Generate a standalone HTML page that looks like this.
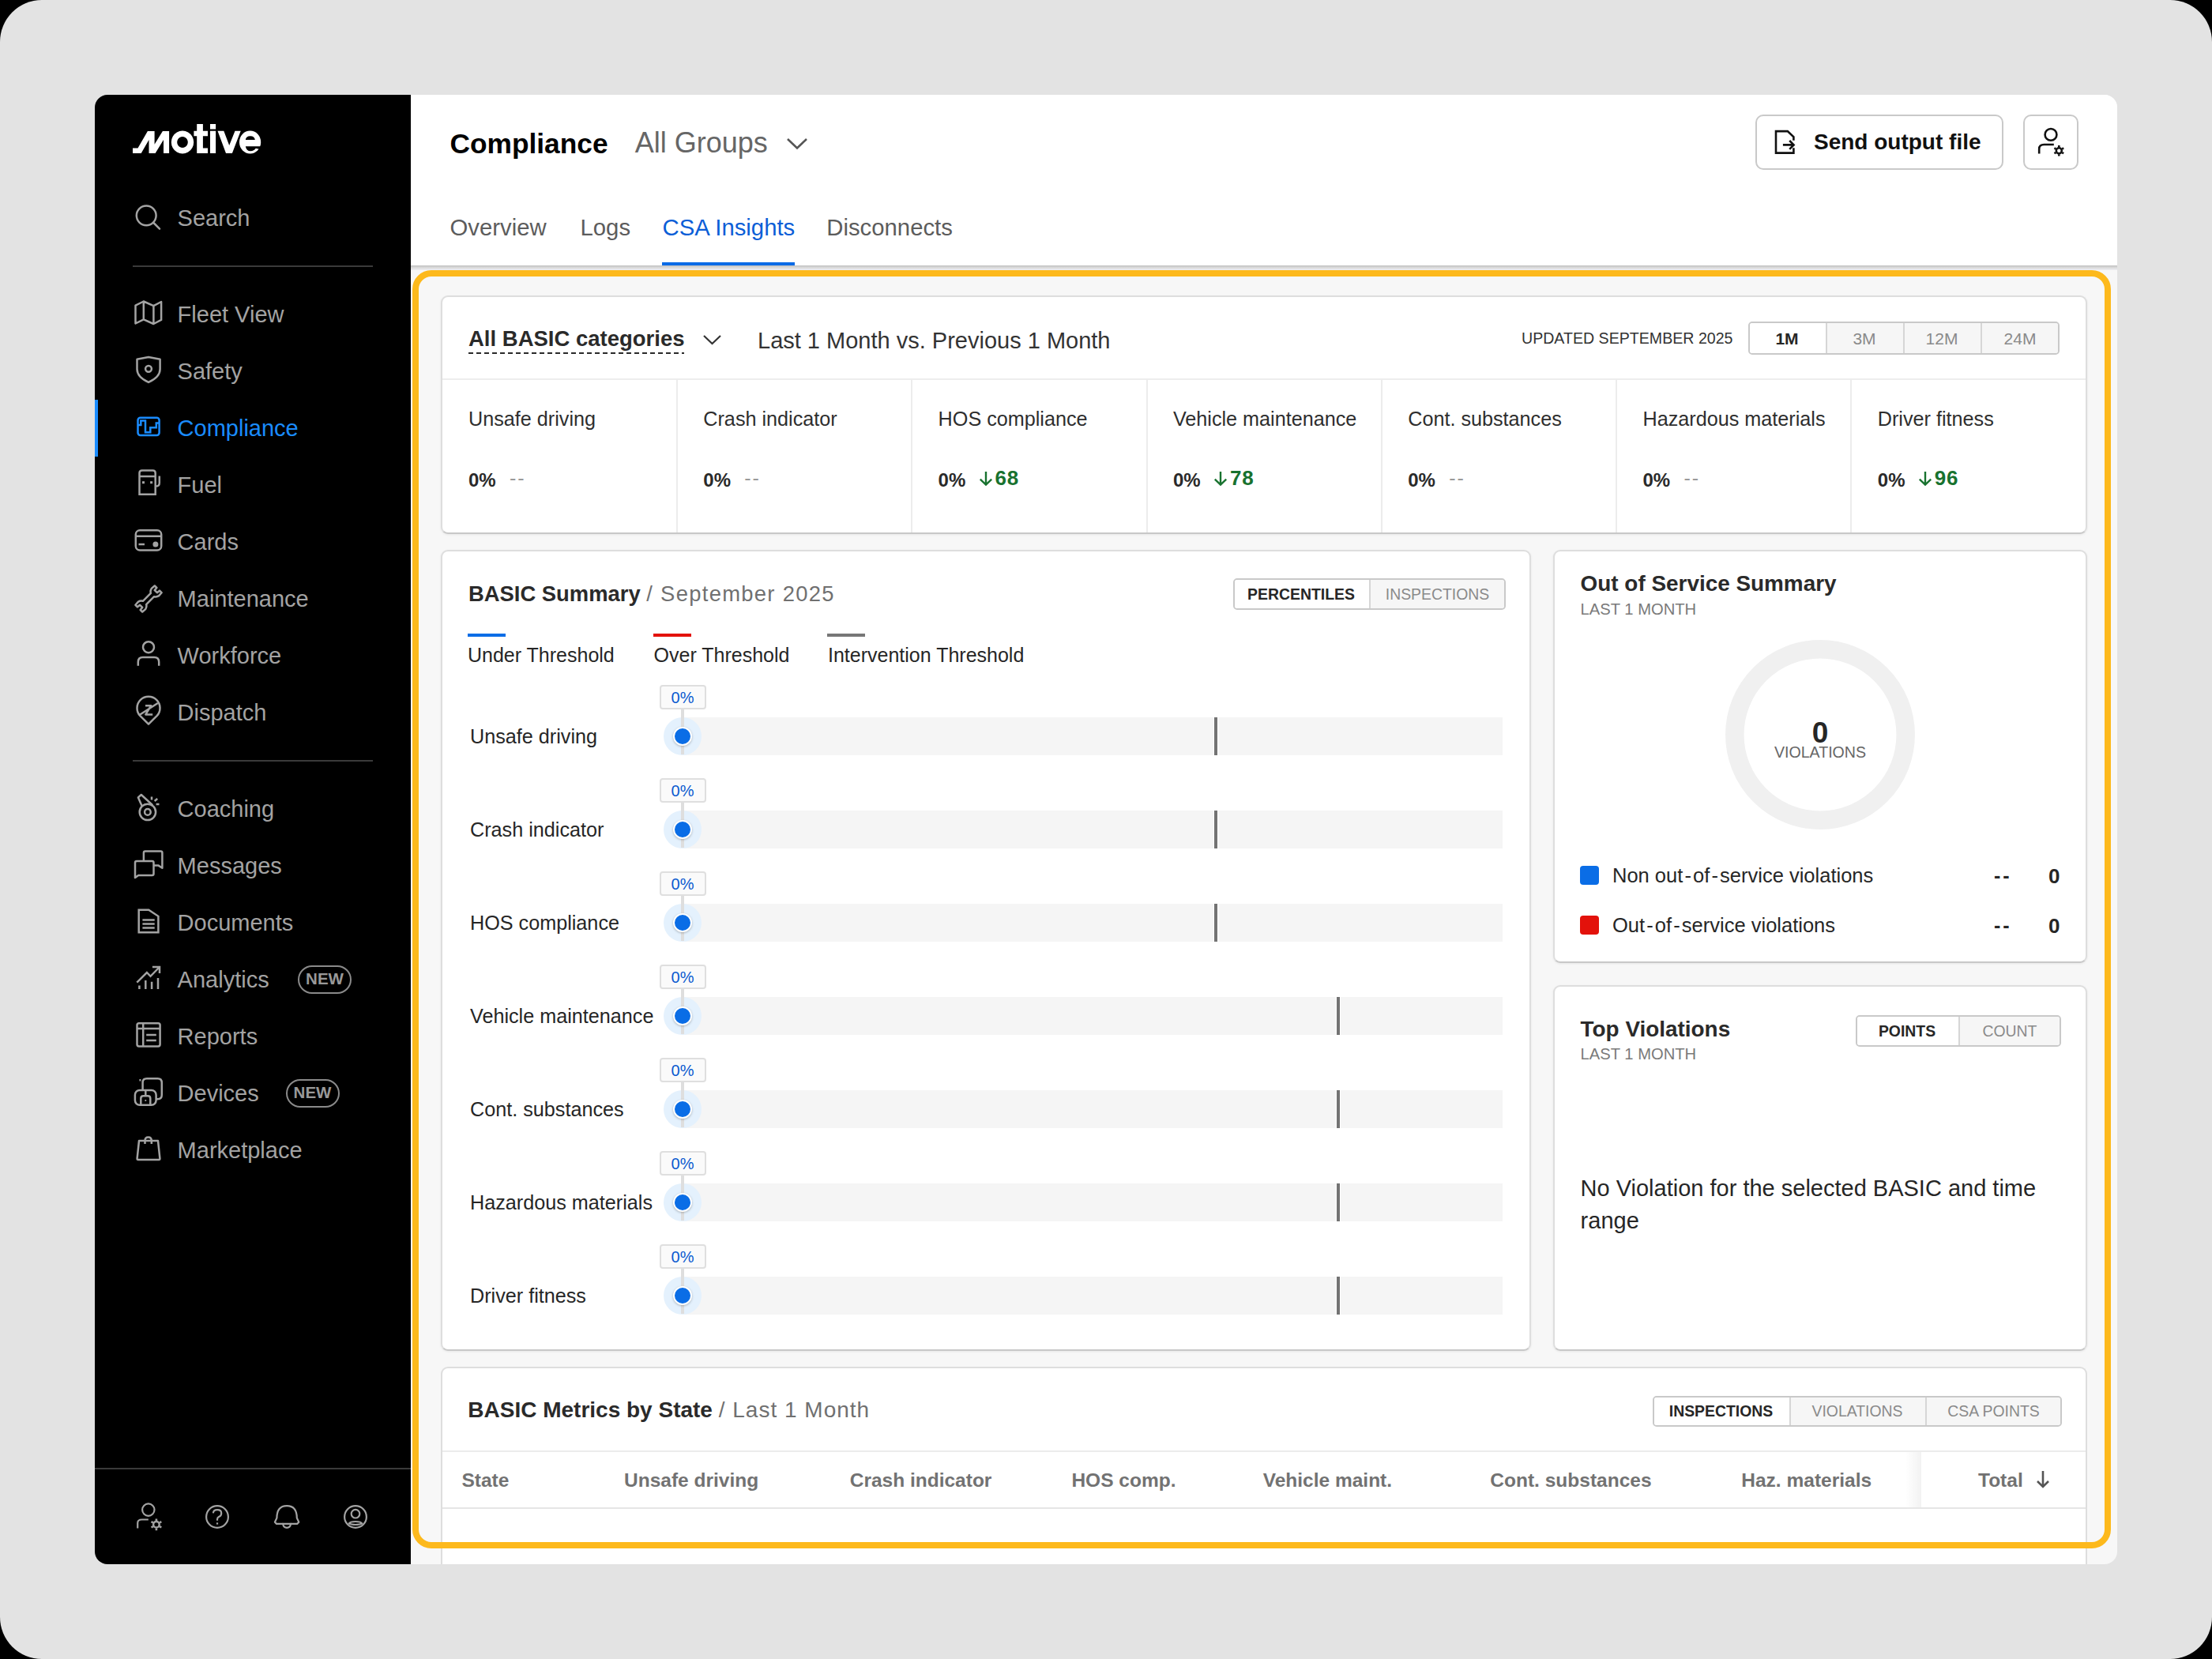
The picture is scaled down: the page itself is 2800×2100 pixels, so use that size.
<!DOCTYPE html>
<html><head><meta charset="utf-8"><title>Compliance - CSA Insights</title>
<style>
html,body{margin:0;padding:0;width:2800px;height:2100px;overflow:hidden;background:#000;}
body{font-family:"Liberation Sans",sans-serif;position:relative;}
.t{position:absolute;white-space:nowrap;line-height:1;}
.r{position:absolute;box-sizing:border-box;}
svg.r{overflow:visible;}
</style></head><body>

<div class="r" style="left:0px;top:0px;width:2800px;height:2100px;background:#e3e3e3;border-radius:53px;"></div>
<div class="r" style="left:120px;top:120px;width:2560px;height:1860px;background:#f7f7f7;border-radius:16px;overflow:hidden;"></div>
<div class="r" style="left:120px;top:120px;width:400px;height:1860px;background:#000;border-radius:16px 0 0 16px;"></div>
<svg class="r" style="left:0;top:0" width="2800" height="2100" viewBox="0 0 2800 2100"><path fill="#fff" d="M168,194 L168,187.5 L174.5,187.5 L186.9,166 L195.6,166 L195.6,182.7 L205.9,166 L214.1,166 L214.1,194 L207,194 L207,177 L196.6,194 L188.5,194 L188.5,177 L178.7,194 ZM231,165.6 a14.2,14.4 0 1,0 0.01,0 Z M231,173.1 a6.8,6.9 0 1,1 -0.01,0 ZM249.2,157 L256.9,157 L256.9,165.8 L263,165.8 L263,172.3 L256.9,172.3 L256.9,187.6 L263,187.6 L263,194 L249.2,194 L249.2,172.3 L245.4,172.3 L245.4,165.8 L249.2,165.8 ZM266,157 L273.1,157 L273.1,163.4 L266,163.4 Z M266,165.8 L273.1,165.8 L273.1,194 L266,194 ZM275.5,165.8 L283.3,165.8 L290.2,184 L297.5,165.8 L304.7,165.8 L293.9,194 L286,194 Z"/><ellipse cx="316.6" cy="180" rx="13.6" ry="14.4" fill="#fff"/><path fill="#000" d="M310.8,177 Q311.4,172.2 316.8,172.2 Q322.2,172.2 322.8,177 Z"/><path fill="#000" d="M310.8,185.2 Q312,191.2 317,191.2 Q321.6,191.2 323.8,187.8 L331,189.5 L331,185.2 Z"/></svg>
<svg class="r" style="left:168px;top:256px" width="40" height="40" viewBox="0 0 20 20" fill="none" stroke="#a3a3a3" stroke-width="1.25" stroke-linecap="round" stroke-linejoin="round"><circle cx="8.6" cy="8.4" r="6.2"/><path d="M13.2,13 L17,16.8"/></svg>
<div class="t" style="left:224.6px;top:261.5px;font-size:29px;font-weight:400;color:#a3a3a3;">Search</div>
<div class="r" style="left:168px;top:336px;width:304px;height:2px;background:#3a3a3a;"></div>
<svg class="r" style="left:168px;top:378px" width="40" height="40" viewBox="0 0 20 20" fill="none" stroke="#a3a3a3" stroke-width="1.25" stroke-linecap="round" stroke-linejoin="round"><path d="M1.75,4.3 L6.9,1.75 L13.2,4.6 L18.05,2 L18.05,13.45 L13.2,16 L6.9,13.2 L1.75,15.75 Z M6.9,1.75 L6.9,13.2 M13.2,4.6 L13.2,16"/></svg>
<div class="t" style="left:224.6px;top:383.5px;font-size:29px;font-weight:400;color:#a3a3a3;">Fleet View</div>
<svg class="r" style="left:168px;top:450px" width="40" height="40" viewBox="0 0 20 20" fill="none" stroke="#a3a3a3" stroke-width="1.25" stroke-linecap="round" stroke-linejoin="round"><path d="M10,0.95 L17.3,2.35 L17.3,8.6 Q17.3,13.6 10,16.95 Q2.75,13.6 2.75,8.6 L2.75,2.35 Z"/><circle cx="10" cy="8.4" r="1.95"/></svg>
<div class="t" style="left:224.6px;top:455.5px;font-size:29px;font-weight:400;color:#a3a3a3;">Safety</div>
<svg class="r" style="left:168px;top:522px" width="40" height="40" viewBox="0 0 20 20" fill="none" stroke="#1a8cff" stroke-width="1.25" stroke-linecap="round" stroke-linejoin="round"><rect x="3.25" y="3.4" width="13.55" height="11.1" rx="1.6"/><path d="M3.25,8.05 L5.15,8.05 L5.15,5.3 L8,5.3 L8,12.65 L11.15,12.65 L11.15,9.6 L14.9,9.6 L14.9,6.75 L16.8,6.75" stroke-linejoin="miter" stroke-linecap="butt"/></svg>
<div class="t" style="left:224.6px;top:527.5px;font-size:29px;font-weight:400;color:#1a8cff;">Compliance</div>
<svg class="r" style="left:168px;top:594px" width="40" height="40" viewBox="0 0 20 20" fill="none" stroke="#a3a3a3" stroke-width="1.25" stroke-linecap="round" stroke-linejoin="round"><path d="M4.25,15.9 L4.25,2.4 Q4.25,0.7 5.95,0.7 L12.65,0.7 Q14.35,0.7 14.35,2.4 L14.35,15.9 Z M4.25,4.55 L14.35,4.55 M14.35,10.85 Q16.9,10.85 16.9,8.8 L16.9,4.2" stroke-linejoin="miter" stroke-linecap="butt"/><rect x="6" y="7.6" width="1.5" height="1.5" fill="#a3a3a3" stroke="none"/><rect x="11.05" y="7.6" width="1.5" height="1.5" fill="#a3a3a3" stroke="none"/></svg>
<div class="t" style="left:224.6px;top:599.5px;font-size:29px;font-weight:400;color:#a3a3a3;">Fuel</div>
<svg class="r" style="left:168px;top:666px" width="40" height="40" viewBox="0 0 20 20" fill="none" stroke="#a3a3a3" stroke-width="1.25" stroke-linecap="round" stroke-linejoin="round"><rect x="1.9" y="2.65" width="16.2" height="12.55" rx="2.6"/><path d="M1.9,6.4 L18.1,6.4 M3.75,11.45 L7.5,11.45" stroke-linecap="butt"/><circle cx="14.45" cy="11.45" r="1.75" fill="#a3a3a3" stroke="none"/></svg>
<div class="t" style="left:224.6px;top:671.5px;font-size:29px;font-weight:400;color:#a3a3a3;">Cards</div>
<svg class="r" style="left:168px;top:738px" width="40" height="40" viewBox="0 0 20 20" fill="none" stroke="#a3a3a3" stroke-width="1.25" stroke-linecap="round" stroke-linejoin="round"><g transform="rotate(-45 10 10)"><path d="M1.4,6.9 L4,6.7 Q5.7,7.1 6.5,8.5 L13.5,8.5 Q14.3,7.1 16,6.7 L18.6,6.9 L18.6,8.7 L16.6,8.9 L16.6,11.1 L18.6,11.3 L18.6,13.1 L16,13.3 Q14.3,12.9 13.5,11.5 L6.5,11.5 Q5.7,12.9 4,13.3 L1.4,13.1 L1.4,11.3 L3.4,11.1 L3.4,8.9 L1.4,8.7 Z"/></g></svg>
<div class="t" style="left:224.6px;top:743.5px;font-size:29px;font-weight:400;color:#a3a3a3;">Maintenance</div>
<svg class="r" style="left:168px;top:810px" width="40" height="40" viewBox="0 0 20 20" fill="none" stroke="#a3a3a3" stroke-width="1.25" stroke-linecap="round" stroke-linejoin="round"><circle cx="10" cy="4.6" r="3.5"/><path d="M3.4,16.4 L3.4,14 Q3.4,11 6.4,11 L13.6,11 Q16.6,11 16.6,14 L16.6,16.4" stroke-linecap="butt"/></svg>
<div class="t" style="left:224.6px;top:815.5px;font-size:29px;font-weight:400;color:#a3a3a3;">Workforce</div>
<svg class="r" style="left:168px;top:882px" width="40" height="40" viewBox="0 0 20 20" fill="none" stroke="#a3a3a3" stroke-width="1.25" stroke-linecap="round" stroke-linejoin="round"><path d="M10,17.35 L4.7,12.1 A7.25,7.25 0 1,1 15.3,12.1 Z"/><path d="M4.45,11.35 L15.9,4 M8,5.6 L11.6,5.6 L8.2,11.2 L12.6,11.2" stroke-linecap="butt"/></svg>
<div class="t" style="left:224.6px;top:887.5px;font-size:29px;font-weight:400;color:#a3a3a3;">Dispatch</div>
<div class="r" style="left:120px;top:506px;width:4px;height:72px;background:#1a8cff;"></div>
<div class="r" style="left:168px;top:962px;width:304px;height:2px;background:#3a3a3a;"></div>
<svg class="r" style="left:168px;top:1004px" width="40" height="40" viewBox="0 0 20 20" fill="none" stroke="#a3a3a3" stroke-width="1.25" stroke-linecap="round" stroke-linejoin="round"><circle cx="9.45" cy="11.95" r="5.1"/><circle cx="9.45" cy="11.95" r="1.9"/><path d="M5.9,8.3 L3.45,2.7 L5.4,1 L12.6,7.6" stroke-linecap="butt"/><path d="M12,2.3 L12,4.25 M13.85,5 L15.6,3.5 M14.8,7 L16.75,7" stroke-linecap="butt"/></svg>
<div class="t" style="left:224.6px;top:1009.5px;font-size:29px;font-weight:400;color:#a3a3a3;">Coaching</div>
<svg class="r" style="left:168px;top:1076px" width="40" height="40" viewBox="0 0 20 20" fill="none" stroke="#a3a3a3" stroke-width="1.25" stroke-linecap="round" stroke-linejoin="round"><path d="M6.95,7 L6.95,1.75 Q6.95,0.75 7.95,0.75 L17.7,0.75 Q18.7,0.75 18.7,1.75 L18.7,11.35 L16.3,9.8 L13.25,9.8" stroke-linecap="butt"/><path d="M1.5,17.5 L1.5,8 Q1.5,7 2.5,7 L12.25,7 Q13.25,7 13.25,8 L13.25,15 Q13.25,16 12.25,16 L3.6,16 Z"/></svg>
<div class="t" style="left:224.6px;top:1081.5px;font-size:29px;font-weight:400;color:#a3a3a3;">Messages</div>
<svg class="r" style="left:168px;top:1148px" width="40" height="40" viewBox="0 0 20 20" fill="none" stroke="#a3a3a3" stroke-width="1.25" stroke-linecap="round" stroke-linejoin="round"><path d="M3.85,1.85 L10.1,1.85 L16.2,5.9 L16.2,16.1 L3.85,16.1 Z" stroke-linejoin="miter"/><path d="M6.2,8.25 L13.85,8.25 M6.2,10.75 L13.85,10.75 M6.2,13.2 L13.85,13.2" stroke-linecap="butt"/></svg>
<div class="t" style="left:224.6px;top:1153.5px;font-size:29px;font-weight:400;color:#a3a3a3;">Documents</div>
<svg class="r" style="left:168px;top:1220px" width="40" height="40" viewBox="0 0 20 20" fill="none" stroke="#a3a3a3" stroke-width="1.25" stroke-linecap="round" stroke-linejoin="round"><path d="M2.65,11.8 L8.95,5.5 L11.25,7.9 L17,2 M12.45,2 L17,2 L17,5.95" stroke-linecap="butt" stroke-linejoin="miter"/><path d="M4.2,13.75 L4.2,16 M8.15,10.5 L8.15,16 M12.05,11.4 L12.05,16 M16,9 L16,16" stroke-linecap="butt"/></svg>
<div class="t" style="left:224.6px;top:1225.5px;font-size:29px;font-weight:400;color:#a3a3a3;">Analytics</div>
<svg class="r" style="left:168px;top:1292px" width="40" height="40" viewBox="0 0 20 20" fill="none" stroke="#a3a3a3" stroke-width="1.25" stroke-linecap="round" stroke-linejoin="round"><rect x="2.75" y="1.6" width="14.55" height="14.6" rx="1.2"/><path d="M2.75,5 L17.3,5 M6.6,1.6 L6.6,16.2 M8.6,9 L14.9,9 M8.6,12.45 L14.9,12.45" stroke-linecap="butt"/></svg>
<div class="t" style="left:224.6px;top:1297.5px;font-size:29px;font-weight:400;color:#a3a3a3;">Reports</div>
<svg class="r" style="left:168px;top:1364px" width="40" height="40" viewBox="0 0 20 20" fill="none" stroke="#a3a3a3" stroke-width="1.25" stroke-linecap="round" stroke-linejoin="round"><path d="M5.2,1.6 L4.2,1.6 M6.3,7.95 L6.3,3.2 Q6.3,0.6 8.9,0.6 L15.8,0.6 Q18.4,0.6 18.4,3.2 L18.4,11 Q18.4,13.6 15.8,13.6 L14.8,13.6" stroke-linecap="butt"/><rect x="1.45" y="7.95" width="13.35" height="9.45" rx="3"/><path d="M5.15,17.4 L5.15,13.2 Q5.15,11.65 6.7,11.65 L9.6,11.65 Q11.15,11.65 11.15,13.2 L11.15,17.4 M8.15,7.95 L8.15,11.65" stroke-linecap="butt"/><circle cx="8.15" cy="14.5" r="0.55" fill="#a3a3a3" stroke="none"/></svg>
<div class="t" style="left:224.6px;top:1369.5px;font-size:29px;font-weight:400;color:#a3a3a3;">Devices</div>
<svg class="r" style="left:168px;top:1436px" width="40" height="40" viewBox="0 0 20 20" fill="none" stroke="#a3a3a3" stroke-width="1.25" stroke-linecap="round" stroke-linejoin="round"><path d="M4,4 L16,4 L17.2,15.2 Q17.3,16 16.5,16 L3.5,16 Q2.7,16 2.8,15.2 Z"/><path d="M7.75,6 L7.75,4 Q7.75,1.7 9.85,1.7 Q11.9,1.7 11.9,4 L11.9,6" stroke-linecap="butt"/></svg>
<div class="t" style="left:224.6px;top:1441.5px;font-size:29px;font-weight:400;color:#a3a3a3;">Marketplace</div>
<div class="r" style="left:377px;top:1222px;width:68px;height:36px;border:2.4px solid #8a8a8a;border-radius:18px;"></div>
<div class="t" style="left:111.0px;width:600px;text-align:center;top:1228.8px;font-size:20.5px;font-weight:700;color:#999;">NEW</div>
<div class="r" style="left:361.5px;top:1366px;width:68px;height:36px;border:2.4px solid #8a8a8a;border-radius:18px;"></div>
<div class="t" style="left:95.5px;width:600px;text-align:center;top:1372.8px;font-size:20.5px;font-weight:700;color:#999;">NEW</div>
<div class="r" style="left:120px;top:1858px;width:400px;height:2px;background:#3a3a3a;"></div>
<svg class="r" style="left:169px;top:1900px" width="40" height="40" viewBox="0 0 20 20" fill="none" stroke="#a3a3a3" stroke-width="1.1" stroke-linecap="round" stroke-linejoin="round"><circle cx="9.4" cy="5.55" r="3.85"/><path d="M2.6,17.3 L2.6,13.95 Q2.6,11.75 5.3,11.75 L9.4,11.75" stroke-linecap="butt"/><g transform="translate(14.45 14.9)"><circle r="1.9" stroke-width="1.25"/><path d="M0,-3.7 L0,-2.3 M0,2.3 L0,3.7 M-3.2,-1.85 L-2,-1.15 M2,1.15 L3.2,1.85 M-3.2,1.85 L-2,1.15 M2,-1.15 L3.2,-1.85" stroke-width="1.3" stroke-linecap="butt"/></g></svg>
<svg class="r" style="left:255px;top:1900px" width="40" height="40" viewBox="0 0 20 20" fill="none" stroke="#a3a3a3" stroke-width="1.1" stroke-linecap="round" stroke-linejoin="round"><circle cx="10" cy="10" r="6.95"/><path d="M7.4,7.7 Q7.6,5.55 10,5.55 Q12.6,5.55 12.6,7.7 Q12.6,9.2 11.2,9.9 Q10,10.5 10,11.6 L10,12.4" stroke-linecap="butt"/><rect x="9.45" y="13.7" width="1.1" height="1.1" fill="#a3a3a3" stroke="none"/></svg>
<svg class="r" style="left:343px;top:1900px" width="40" height="40" viewBox="0 0 20 20" fill="none" stroke="#a3a3a3" stroke-width="1.1" stroke-linecap="round" stroke-linejoin="round"><path d="M3.7,10.8 Q3.7,3.05 10.05,3.05 Q16.4,3.05 16.4,10.8 L17.65,13.4 L16.6,14.45 L3.5,14.45 L2.45,13.4 Z"/><path d="M7.5,14.45 Q8,16.95 10.05,16.95 Q12.1,16.95 12.6,14.45"/></svg>
<svg class="r" style="left:430px;top:1900px" width="40" height="40" viewBox="0 0 20 20" fill="none" stroke="#a3a3a3" stroke-width="1.1" stroke-linecap="round" stroke-linejoin="round"><circle cx="10" cy="10" r="6.95"/><circle cx="10" cy="8.1" r="2.65"/><path d="M5.9,14.2 Q6.6,13 10,13 Q13.4,13 14.1,14.2 Q13,15 10,15 Q7,15 5.9,14.2 Z"/></svg>
<div class="r" style="left:520px;top:120px;width:2160px;height:216px;background:#fff;border-radius:0 16px 0 0;"></div>
<div class="r" style="left:520px;top:336px;width:2160px;height:6px;background:linear-gradient(180deg,#bdbdbd 0,#cfcfcf 1.5px,#dcdcdc 3px,#e8e8ec 5px,#f0f0f3 6px);"></div>
<div class="t" style="left:569.5px;top:163.7px;font-size:35.3px;font-weight:700;color:#000;">Compliance</div>
<div class="t" style="left:803.7px;top:163.1px;font-size:36px;font-weight:400;color:#666;">All Groups</div>
<svg class="r" style="left:994px;top:170px;" width="30" height="24" viewBox="0 0 30 24"><path d="M3,6 L15,17.5 L27,6" fill="none" stroke="#555" stroke-width="2.6"/></svg>
<div class="t" style="left:569.5px;top:273.0px;font-size:29.3px;font-weight:400;color:#5c5c5c;">Overview</div>
<div class="t" style="left:734.5px;top:273.0px;font-size:29.3px;font-weight:400;color:#5c5c5c;">Logs</div>
<div class="t" style="left:838.5px;top:273.0px;font-size:29.3px;font-weight:400;color:#0b5ed7;">CSA Insights</div>
<div class="t" style="left:1046.3px;top:273.0px;font-size:29.3px;font-weight:400;color:#5c5c5c;">Disconnects</div>
<div class="r" style="left:838px;top:332px;width:168px;height:4px;background:#0a6ae6;"></div>
<div class="r" style="left:2222px;top:145px;width:314px;height:70px;border:2px solid #c9c9c9;border-radius:10px;background:#fff;"></div>
<svg class="r" style="left:2242px;top:160px;" width="36" height="40" viewBox="0 0 36 40"><path d="M28.4,17.8 L28.4,13.4 L20.8,6.1 L6,6.1 L6,33.6 L28.4,33.6 L28.4,27.2" fill="none" stroke="#111" stroke-width="2.6"/><path d="M14.9,23.4 L28.6,23.4 M23.2,18 L28.6,23.4 L23.2,28.8" fill="none" stroke="#111" stroke-width="2.6"/></svg>
<div class="t" style="left:2296.0px;top:166.3px;font-size:28px;font-weight:700;color:#111;">Send output file</div>
<div class="r" style="left:2561px;top:145px;width:70px;height:70px;border:2px solid #c9c9c9;border-radius:10px;background:#fff;"></div>
<svg class="r" style="left:2576px;top:160px;" width="40" height="40" viewBox="0 0 40 40"><circle cx="20" cy="10.4" r="7.4" fill="none" stroke="#111" stroke-width="2.6"/><path d="M5.2,34.5 L5.2,28.5 Q5.2,23 11.5,23 L23.8,23" fill="none" stroke="#111" stroke-width="2.6"/><g transform="translate(30.3 30.8)"><circle r="3.5" fill="none" stroke="#111" stroke-width="2.5"/><path d="M0,-6.8 L0,-4.5 M0,4.5 L0,6.8 M-5.9,-3.4 L-3.9,-2.25 M3.9,2.25 L5.9,3.4 M-5.9,3.4 L-3.9,2.25 M3.9,-2.25 L5.9,-3.4" stroke="#111" stroke-width="2.6"/></g></svg>
<div class="r" style="left:522px;top:342px;width:2150px;height:1618px;border:8px solid #fdb91c;border-radius:24px;z-index:50;"></div>
<div class="r" style="left:558px;top:374px;width:2084px;height:302px;background:#fff;border:2px solid #dedede;border-bottom-color:#c8c8c8;border-radius:9px;box-shadow:0 1px 3px rgba(0,0,0,0.07);"></div>
<div class="t" style="left:593.0px;top:415.2px;font-size:27.5px;font-weight:700;color:#2a2a2a;">All BASIC categories</div>
<div class="r" style="left:593px;top:446px;width:273px;height:2px;background:repeating-linear-gradient(90deg,#2a2a2a 0 6px,transparent 6px 10px);"></div>
<svg class="r" style="left:888px;top:420px;" width="28" height="20" viewBox="0 0 28 20"><path d="M3,5 L13.5,15 L24,5" fill="none" stroke="#333" stroke-width="2.2"/></svg>
<div class="t" style="left:959.0px;top:416.5px;font-size:29px;font-weight:400;color:#333;">Last 1 Month vs. Previous 1 Month</div>
<div class="t" style="left:1926.0px;top:419.0px;font-size:19.6px;font-weight:400;color:#333;">UPDATED SEPTEMBER 2025</div>
<div class="r" style="left:2213px;top:407px;width:394px;height:42px;border:2px solid #c9c9c9;border-radius:5px;background:#f6f6f6;overflow:hidden;">
<div class="r" style="left:-2px;top:-2px;width:98px;height:42px;background:#fff;"></div>
<div class="r" style="left:96px;top:-2px;width:98px;height:42px;background:#f6f6f6;border-left:2px solid #d6d6d6;"></div>
<div class="r" style="left:194px;top:-2px;width:98px;height:42px;background:#f6f6f6;border-left:2px solid #d6d6d6;"></div>
<div class="r" style="left:292px;top:-2px;width:100px;height:42px;background:#f6f6f6;border-left:2px solid #d6d6d6;"></div>
</div>
<div class="t" style="left:1962.0px;width:600px;text-align:center;top:417.8px;font-size:21px;font-weight:700;color:#262626;">1M</div>
<div class="t" style="left:2060.0px;width:600px;text-align:center;top:417.8px;font-size:21px;font-weight:400;color:#8a8a8a;">3M</div>
<div class="t" style="left:2158.0px;width:600px;text-align:center;top:417.8px;font-size:21px;font-weight:400;color:#8a8a8a;">12M</div>
<div class="t" style="left:2257.0px;width:600px;text-align:center;top:417.8px;font-size:21px;font-weight:400;color:#8a8a8a;">24M</div>
<div class="r" style="left:560px;top:479px;width:2080px;height:2px;background:#ededed;"></div>
<div class="t" style="left:593.0px;top:517.7px;font-size:25.2px;font-weight:400;color:#2e2e2e;">Unsafe driving</div>
<div class="t" style="left:593.0px;top:595.7px;font-size:24px;font-weight:700;color:#2a2a2a;">0%</div>
<div class="t" style="left:645.0px;top:592.8px;font-size:25px;font-weight:400;color:#9a9a9a;letter-spacing:2px;">--</div>
<div class="r" style="left:856px;top:481px;width:2px;height:193px;background:#ececec;"></div>
<div class="t" style="left:890.3px;top:517.7px;font-size:25.2px;font-weight:400;color:#2e2e2e;">Crash indicator</div>
<div class="t" style="left:890.3px;top:595.7px;font-size:24px;font-weight:700;color:#2a2a2a;">0%</div>
<div class="t" style="left:942.3px;top:592.8px;font-size:25px;font-weight:400;color:#9a9a9a;letter-spacing:2px;">--</div>
<div class="r" style="left:1153px;top:481px;width:2px;height:193px;background:#ececec;"></div>
<div class="t" style="left:1187.6px;top:517.7px;font-size:25.2px;font-weight:400;color:#2e2e2e;">HOS compliance</div>
<div class="t" style="left:1187.6px;top:595.7px;font-size:24px;font-weight:700;color:#2a2a2a;">0%</div>
<svg class="r" style="left:1238.6px;top:596px;" width="18" height="22" viewBox="0 0 18 22"><path d="M9,1 L9,17.5 M1.8,10.6 L9,17.6 L16.2,10.6" fill="none" stroke="#18722f" stroke-width="2.4"/></svg>
<div class="t" style="left:1259.6px;top:591.8px;font-size:26px;font-weight:700;color:#18722f;letter-spacing:0.8px;">68</div>
<div class="r" style="left:1451px;top:481px;width:2px;height:193px;background:#ececec;"></div>
<div class="t" style="left:1484.9px;top:517.7px;font-size:25.2px;font-weight:400;color:#2e2e2e;">Vehicle maintenance</div>
<div class="t" style="left:1484.9px;top:595.7px;font-size:24px;font-weight:700;color:#2a2a2a;">0%</div>
<svg class="r" style="left:1535.9px;top:596px;" width="18" height="22" viewBox="0 0 18 22"><path d="M9,1 L9,17.5 M1.8,10.6 L9,17.6 L16.2,10.6" fill="none" stroke="#18722f" stroke-width="2.4"/></svg>
<div class="t" style="left:1556.9px;top:591.8px;font-size:26px;font-weight:700;color:#18722f;letter-spacing:0.8px;">78</div>
<div class="r" style="left:1748px;top:481px;width:2px;height:193px;background:#ececec;"></div>
<div class="t" style="left:1782.2px;top:517.7px;font-size:25.2px;font-weight:400;color:#2e2e2e;">Cont. substances</div>
<div class="t" style="left:1782.2px;top:595.7px;font-size:24px;font-weight:700;color:#2a2a2a;">0%</div>
<div class="t" style="left:1834.2px;top:592.8px;font-size:25px;font-weight:400;color:#9a9a9a;letter-spacing:2px;">--</div>
<div class="r" style="left:2045px;top:481px;width:2px;height:193px;background:#ececec;"></div>
<div class="t" style="left:2079.5px;top:517.7px;font-size:25.2px;font-weight:400;color:#2e2e2e;">Hazardous materials</div>
<div class="t" style="left:2079.5px;top:595.7px;font-size:24px;font-weight:700;color:#2a2a2a;">0%</div>
<div class="t" style="left:2131.5px;top:592.8px;font-size:25px;font-weight:400;color:#9a9a9a;letter-spacing:2px;">--</div>
<div class="r" style="left:2342px;top:481px;width:2px;height:193px;background:#ececec;"></div>
<div class="t" style="left:2376.8px;top:517.7px;font-size:25.2px;font-weight:400;color:#2e2e2e;">Driver fitness</div>
<div class="t" style="left:2376.8px;top:595.7px;font-size:24px;font-weight:700;color:#2a2a2a;">0%</div>
<svg class="r" style="left:2427.8px;top:596px;" width="18" height="22" viewBox="0 0 18 22"><path d="M9,1 L9,17.5 M1.8,10.6 L9,17.6 L16.2,10.6" fill="none" stroke="#18722f" stroke-width="2.4"/></svg>
<div class="t" style="left:2448.8px;top:591.8px;font-size:26px;font-weight:700;color:#18722f;letter-spacing:0.8px;">96</div>
<div class="r" style="left:558px;top:696px;width:1380px;height:1014px;background:#fff;border:2px solid #dedede;border-bottom-color:#c8c8c8;border-radius:9px;box-shadow:0 1px 3px rgba(0,0,0,0.07);"></div>
<div class="t" style="left:593.0px;top:737.8px;font-size:27.4px;font-weight:700;color:#2a2a2a;">BASIC Summary <span style="font-weight:400;color:#707070;letter-spacing:1.3px">/ September 2025</span></div>
<div class="r" style="left:1561px;top:732px;width:345px;height:40px;border:2px solid #c9c9c9;border-radius:5px;background:#f6f6f6;overflow:hidden;">
<div class="r" style="left:-2px;top:-2px;width:172px;height:40px;background:#fff;"></div>
<div class="r" style="left:170px;top:-2px;width:173px;height:40px;background:#f6f6f6;border-left:2px solid #d6d6d6;"></div>
</div>
<div class="t" style="left:1347.0px;width:600px;text-align:center;top:742.6px;font-size:19.4px;font-weight:700;color:#262626;">PERCENTILES</div>
<div class="t" style="left:1519.5px;width:600px;text-align:center;top:742.6px;font-size:19.4px;font-weight:400;color:#8a8a8a;">INSPECTIONS</div>
<div class="r" style="left:592px;top:802px;width:48px;height:4px;background:#0a6de6;"></div>
<div class="r" style="left:827px;top:802px;width:48px;height:4px;background:#e3120b;"></div>
<div class="r" style="left:1047px;top:802px;width:48px;height:4px;background:#777;"></div>
<div class="t" style="left:592.0px;top:817.2px;font-size:25px;font-weight:400;color:#262626;">Under Threshold</div>
<div class="t" style="left:827.6px;top:817.2px;font-size:25px;font-weight:400;color:#262626;">Over Threshold</div>
<div class="t" style="left:1048.0px;top:817.2px;font-size:25px;font-weight:400;color:#262626;">Intervention Threshold</div>
<div class="t" style="left:595.0px;top:920.2px;font-size:25.2px;font-weight:400;color:#262626;">Unsafe driving</div>
<div class="r" style="left:864px;top:908px;width:1038px;height:48px;background:#f5f5f5;"></div>
<div class="r" style="left:1536px;top:908px;width:6px;height:48px;background:#fff;"></div>
<div class="r" style="left:1537px;top:908px;width:4px;height:48px;background:#737373;"></div>
<div class="r" style="left:840px;top:908px;width:48px;height:48px;border-radius:50%;background:#e4f1fd;"></div>
<div class="r" style="left:862px;top:898px;width:4px;height:57px;background:#dedede;"></div>
<div class="r" style="left:834.5px;top:867.4px;width:59px;height:31px;border:2px solid #dfdfdf;border-radius:4px;background:#fafafa;"></div>
<div class="t" style="left:564.0px;width:600px;text-align:center;top:872.9px;font-size:20px;font-weight:400;color:#0a5ad0;">0%</div>
<div class="r" style="left:852px;top:920px;width:24px;height:24px;border-radius:50%;background:#0a6de6;border:2px solid #fff;box-shadow:0 1px 3px rgba(0,0,0,0.25);"></div>
<div class="t" style="left:595.0px;top:1038.2px;font-size:25.2px;font-weight:400;color:#262626;">Crash indicator</div>
<div class="r" style="left:864px;top:1026px;width:1038px;height:48px;background:#f5f5f5;"></div>
<div class="r" style="left:1536px;top:1026px;width:6px;height:48px;background:#fff;"></div>
<div class="r" style="left:1537px;top:1026px;width:4px;height:48px;background:#737373;"></div>
<div class="r" style="left:840px;top:1026px;width:48px;height:48px;border-radius:50%;background:#e4f1fd;"></div>
<div class="r" style="left:862px;top:1016px;width:4px;height:57px;background:#dedede;"></div>
<div class="r" style="left:834.5px;top:985.4px;width:59px;height:31px;border:2px solid #dfdfdf;border-radius:4px;background:#fafafa;"></div>
<div class="t" style="left:564.0px;width:600px;text-align:center;top:990.9px;font-size:20px;font-weight:400;color:#0a5ad0;">0%</div>
<div class="r" style="left:852px;top:1038px;width:24px;height:24px;border-radius:50%;background:#0a6de6;border:2px solid #fff;box-shadow:0 1px 3px rgba(0,0,0,0.25);"></div>
<div class="t" style="left:595.0px;top:1156.2px;font-size:25.2px;font-weight:400;color:#262626;">HOS compliance</div>
<div class="r" style="left:864px;top:1144px;width:1038px;height:48px;background:#f5f5f5;"></div>
<div class="r" style="left:1536px;top:1144px;width:6px;height:48px;background:#fff;"></div>
<div class="r" style="left:1537px;top:1144px;width:4px;height:48px;background:#737373;"></div>
<div class="r" style="left:840px;top:1144px;width:48px;height:48px;border-radius:50%;background:#e4f1fd;"></div>
<div class="r" style="left:862px;top:1134px;width:4px;height:57px;background:#dedede;"></div>
<div class="r" style="left:834.5px;top:1103.4px;width:59px;height:31px;border:2px solid #dfdfdf;border-radius:4px;background:#fafafa;"></div>
<div class="t" style="left:564.0px;width:600px;text-align:center;top:1108.9px;font-size:20px;font-weight:400;color:#0a5ad0;">0%</div>
<div class="r" style="left:852px;top:1156px;width:24px;height:24px;border-radius:50%;background:#0a6de6;border:2px solid #fff;box-shadow:0 1px 3px rgba(0,0,0,0.25);"></div>
<div class="t" style="left:595.0px;top:1274.2px;font-size:25.2px;font-weight:400;color:#262626;">Vehicle maintenance</div>
<div class="r" style="left:864px;top:1262px;width:1038px;height:48px;background:#f5f5f5;"></div>
<div class="r" style="left:1691px;top:1262px;width:6px;height:48px;background:#fff;"></div>
<div class="r" style="left:1692px;top:1262px;width:4px;height:48px;background:#737373;"></div>
<div class="r" style="left:840px;top:1262px;width:48px;height:48px;border-radius:50%;background:#e4f1fd;"></div>
<div class="r" style="left:862px;top:1252px;width:4px;height:57px;background:#dedede;"></div>
<div class="r" style="left:834.5px;top:1221.4px;width:59px;height:31px;border:2px solid #dfdfdf;border-radius:4px;background:#fafafa;"></div>
<div class="t" style="left:564.0px;width:600px;text-align:center;top:1226.9px;font-size:20px;font-weight:400;color:#0a5ad0;">0%</div>
<div class="r" style="left:852px;top:1274px;width:24px;height:24px;border-radius:50%;background:#0a6de6;border:2px solid #fff;box-shadow:0 1px 3px rgba(0,0,0,0.25);"></div>
<div class="t" style="left:595.0px;top:1392.2px;font-size:25.2px;font-weight:400;color:#262626;">Cont. substances</div>
<div class="r" style="left:864px;top:1380px;width:1038px;height:48px;background:#f5f5f5;"></div>
<div class="r" style="left:1691px;top:1380px;width:6px;height:48px;background:#fff;"></div>
<div class="r" style="left:1692px;top:1380px;width:4px;height:48px;background:#737373;"></div>
<div class="r" style="left:840px;top:1380px;width:48px;height:48px;border-radius:50%;background:#e4f1fd;"></div>
<div class="r" style="left:862px;top:1370px;width:4px;height:57px;background:#dedede;"></div>
<div class="r" style="left:834.5px;top:1339.4px;width:59px;height:31px;border:2px solid #dfdfdf;border-radius:4px;background:#fafafa;"></div>
<div class="t" style="left:564.0px;width:600px;text-align:center;top:1344.9px;font-size:20px;font-weight:400;color:#0a5ad0;">0%</div>
<div class="r" style="left:852px;top:1392px;width:24px;height:24px;border-radius:50%;background:#0a6de6;border:2px solid #fff;box-shadow:0 1px 3px rgba(0,0,0,0.25);"></div>
<div class="t" style="left:595.0px;top:1510.2px;font-size:25.2px;font-weight:400;color:#262626;">Hazardous materials</div>
<div class="r" style="left:864px;top:1498px;width:1038px;height:48px;background:#f5f5f5;"></div>
<div class="r" style="left:1691px;top:1498px;width:6px;height:48px;background:#fff;"></div>
<div class="r" style="left:1692px;top:1498px;width:4px;height:48px;background:#737373;"></div>
<div class="r" style="left:840px;top:1498px;width:48px;height:48px;border-radius:50%;background:#e4f1fd;"></div>
<div class="r" style="left:862px;top:1488px;width:4px;height:57px;background:#dedede;"></div>
<div class="r" style="left:834.5px;top:1457.4px;width:59px;height:31px;border:2px solid #dfdfdf;border-radius:4px;background:#fafafa;"></div>
<div class="t" style="left:564.0px;width:600px;text-align:center;top:1462.9px;font-size:20px;font-weight:400;color:#0a5ad0;">0%</div>
<div class="r" style="left:852px;top:1510px;width:24px;height:24px;border-radius:50%;background:#0a6de6;border:2px solid #fff;box-shadow:0 1px 3px rgba(0,0,0,0.25);"></div>
<div class="t" style="left:595.0px;top:1628.2px;font-size:25.2px;font-weight:400;color:#262626;">Driver fitness</div>
<div class="r" style="left:864px;top:1616px;width:1038px;height:48px;background:#f5f5f5;"></div>
<div class="r" style="left:1691px;top:1616px;width:6px;height:48px;background:#fff;"></div>
<div class="r" style="left:1692px;top:1616px;width:4px;height:48px;background:#737373;"></div>
<div class="r" style="left:840px;top:1616px;width:48px;height:48px;border-radius:50%;background:#e4f1fd;"></div>
<div class="r" style="left:862px;top:1606px;width:4px;height:57px;background:#dedede;"></div>
<div class="r" style="left:834.5px;top:1575.4px;width:59px;height:31px;border:2px solid #dfdfdf;border-radius:4px;background:#fafafa;"></div>
<div class="t" style="left:564.0px;width:600px;text-align:center;top:1580.9px;font-size:20px;font-weight:400;color:#0a5ad0;">0%</div>
<div class="r" style="left:852px;top:1628px;width:24px;height:24px;border-radius:50%;background:#0a6de6;border:2px solid #fff;box-shadow:0 1px 3px rgba(0,0,0,0.25);"></div>
<div class="r" style="left:1966px;top:696px;width:676px;height:523px;background:#fff;border:2px solid #dedede;border-bottom-color:#c8c8c8;border-radius:9px;box-shadow:0 1px 3px rgba(0,0,0,0.07);"></div>
<div class="t" style="left:2000.6px;top:725.4px;font-size:27.9px;font-weight:700;color:#2a2a2a;">Out of Service Summary</div>
<div class="t" style="left:2000.6px;top:760.9px;font-size:20.2px;font-weight:400;color:#7a7a7a;">LAST 1 MONTH</div>
<svg class="r" style="left:2174px;top:800px" width="260" height="260" viewBox="0 0 260 260"><circle cx="130" cy="130" r="108.2" fill="none" stroke="#f0f0f0" stroke-width="23.5"/></svg>
<div class="t" style="left:2004.0px;width:600px;text-align:center;top:908.7px;font-size:37px;font-weight:700;color:#262626;">0</div>
<div class="t" style="left:2004.0px;width:600px;text-align:center;top:942.8px;font-size:19.6px;font-weight:400;color:#666;">VIOLATIONS</div>
<div class="r" style="left:2000px;top:1096px;width:24px;height:24px;background:#0a6de6;border-radius:4px;"></div>
<div class="r" style="left:2000px;top:1159px;width:24px;height:24px;background:#e3120b;border-radius:4px;"></div>
<div class="t" style="left:2041.0px;top:1095.9px;font-size:25.5px;font-weight:400;color:#262626;">Non out&#8202;-&#8202;of&#8202;-&#8202;service violations</div>
<div class="t" style="left:2041.0px;top:1158.9px;font-size:25.5px;font-weight:400;color:#262626;">Out&#8202;-&#8202;of&#8202;-&#8202;service violations</div>
<div class="t" style="left:2524.0px;top:1096.3px;font-size:25px;font-weight:700;color:#262626;letter-spacing:3px;">--</div>
<div class="t" style="left:2007.5px;width:600px;text-align:right;top:1095.5px;font-size:26px;font-weight:700;color:#262626;">0</div>
<div class="t" style="left:2524.0px;top:1159.3px;font-size:25px;font-weight:700;color:#262626;letter-spacing:3px;">--</div>
<div class="t" style="left:2007.5px;width:600px;text-align:right;top:1158.5px;font-size:26px;font-weight:700;color:#262626;">0</div>
<div class="r" style="left:1966px;top:1247px;width:676px;height:463px;background:#fff;border:2px solid #dedede;border-bottom-color:#c8c8c8;border-radius:9px;box-shadow:0 1px 3px rgba(0,0,0,0.07);"></div>
<div class="t" style="left:2000.6px;top:1288.9px;font-size:27.9px;font-weight:700;color:#2a2a2a;">Top Violations</div>
<div class="t" style="left:2000.6px;top:1324.4px;font-size:20.2px;font-weight:400;color:#7a7a7a;">LAST 1 MONTH</div>
<div class="r" style="left:2349px;top:1285px;width:260px;height:40px;border:2px solid #c9c9c9;border-radius:5px;background:#f6f6f6;overflow:hidden;">
<div class="r" style="left:-2px;top:-2px;width:130px;height:40px;background:#fff;"></div>
<div class="r" style="left:128px;top:-2px;width:130px;height:40px;background:#f6f6f6;border-left:2px solid #d6d6d6;"></div>
</div>
<div class="t" style="left:2114.0px;width:600px;text-align:center;top:1295.6px;font-size:19.4px;font-weight:700;color:#262626;">POINTS</div>
<div class="t" style="left:2244.0px;width:600px;text-align:center;top:1295.6px;font-size:19.4px;font-weight:400;color:#8a8a8a;">COUNT</div>
<div class="t" style="left:2000.6px;top:1490.0px;font-size:29px;font-weight:400;color:#262626;">No Violation for the selected BASIC and time</div>
<div class="t" style="left:2000.6px;top:1530.5px;font-size:29px;font-weight:400;color:#262626;">range</div>
<div class="r" style="left:558px;top:1730px;width:2084px;height:250px;background:#fff;border:2px solid #dedede;border-bottom:none;border-radius:9px 9px 0 0;"></div>
<div class="t" style="left:592.3px;top:1770.5px;font-size:28px;font-weight:700;color:#2a2a2a;">BASIC Metrics by State <span style="font-weight:400;color:#707070;letter-spacing:1px">/ Last 1 Month</span></div>
<div class="r" style="left:2092px;top:1767px;width:518px;height:39px;border:2px solid #c9c9c9;border-radius:5px;background:#f6f6f6;overflow:hidden;">
<div class="r" style="left:-2px;top:-2px;width:173px;height:39px;background:#fff;"></div>
<div class="r" style="left:171px;top:-2px;width:172px;height:39px;background:#f6f6f6;border-left:2px solid #d6d6d6;"></div>
<div class="r" style="left:343px;top:-2px;width:173px;height:39px;background:#f6f6f6;border-left:2px solid #d6d6d6;"></div>
</div>
<div class="t" style="left:1878.5px;width:600px;text-align:center;top:1777.1px;font-size:19.4px;font-weight:700;color:#262626;">INSPECTIONS</div>
<div class="t" style="left:2051.0px;width:600px;text-align:center;top:1777.1px;font-size:19.4px;font-weight:400;color:#8a8a8a;">VIOLATIONS</div>
<div class="t" style="left:2223.5px;width:600px;text-align:center;top:1777.1px;font-size:19.4px;font-weight:400;color:#8a8a8a;">CSA POINTS</div>
<div class="r" style="left:560px;top:1836px;width:2080px;height:2px;background:#ececec;"></div>
<div class="r" style="left:560px;top:1908px;width:2080px;height:2px;background:#e6e6e6;"></div>
<div class="r" style="left:2412px;top:1838px;width:20px;height:70px;background:linear-gradient(90deg,rgba(0,0,0,0),rgba(0,0,0,0.05));"></div>
<div class="t" style="left:584.4px;top:1862.3px;font-size:24.5px;font-weight:700;color:#727272;">State</div>
<div class="t" style="left:790.0px;top:1862.3px;font-size:24.5px;font-weight:700;color:#727272;">Unsafe driving</div>
<div class="t" style="left:1075.7px;top:1862.3px;font-size:24.5px;font-weight:700;color:#727272;">Crash indicator</div>
<div class="t" style="left:1356.4px;top:1862.3px;font-size:24.5px;font-weight:700;color:#727272;">HOS comp.</div>
<div class="t" style="left:1598.7px;top:1862.3px;font-size:24.5px;font-weight:700;color:#727272;">Vehicle maint.</div>
<div class="t" style="left:1886.3px;top:1862.3px;font-size:24.5px;font-weight:700;color:#727272;">Cont. substances</div>
<div class="t" style="left:2204.3px;top:1862.3px;font-size:24.5px;font-weight:700;color:#727272;">Haz. materials</div>
<div class="t" style="left:2504.0px;top:1862.3px;font-size:24.5px;font-weight:700;color:#727272;">Total</div>
<svg class="r" style="left:2576px;top:1860px;" width="20" height="26" viewBox="0 0 20 26"><path d="M10,2 L10,22 M3,15 L10,22 L17,15" fill="none" stroke="#555" stroke-width="2.6"/></svg>
</body></html>
